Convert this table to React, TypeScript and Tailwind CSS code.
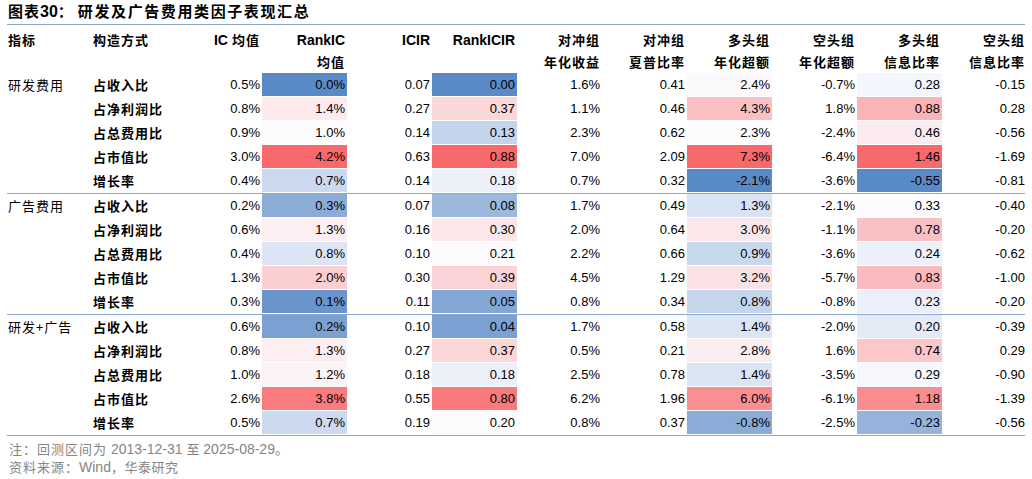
import React from "react";

type Row = string[];
type Section = { name: string; rows: Row[] };

const sections: Section[] = [
  {
    name: "研发费用",
    rows: [
      ["占收入比", "0.5%", "0.0%", "0.07", "0.00", "1.6%", "0.41", "2.4%", "-0.7%", "0.28", "-0.15"],
      ["占净利润比", "0.8%", "1.4%", "0.27", "0.37", "1.1%", "0.46", "4.3%", "1.8%", "0.88", "0.28"],
      ["占总费用比", "0.9%", "1.0%", "0.14", "0.13", "2.3%", "0.62", "2.3%", "-2.4%", "0.46", "-0.56"],
      ["占市值比", "3.0%", "4.2%", "0.63", "0.88", "7.0%", "2.09", "7.3%", "-6.4%", "1.46", "-1.69"],
      ["增长率", "0.4%", "0.7%", "0.14", "0.18", "0.7%", "0.32", "-2.1%", "-3.6%", "-0.55", "-0.81"],
    ],
  },
  {
    name: "广告费用",
    rows: [
      ["占收入比", "0.2%", "0.3%", "0.07", "0.08", "1.7%", "0.49", "1.3%", "-2.1%", "0.33", "-0.40"],
      ["占净利润比", "0.6%", "1.3%", "0.16", "0.30", "2.0%", "0.64", "3.0%", "-1.1%", "0.78", "-0.20"],
      ["占总费用比", "0.4%", "0.8%", "0.10", "0.21", "2.2%", "0.66", "0.9%", "-3.6%", "0.24", "-0.62"],
      ["占市值比", "1.3%", "2.0%", "0.30", "0.39", "4.5%", "1.29", "3.2%", "-5.7%", "0.83", "-1.00"],
      ["增长率", "0.3%", "0.1%", "0.11", "0.05", "0.8%", "0.34", "0.8%", "-0.8%", "0.23", "-0.20"],
    ],
  },
  {
    name: "研发+广告",
    rows: [
      ["占收入比", "0.6%", "0.2%", "0.10", "0.04", "1.7%", "0.58", "1.4%", "-2.0%", "0.20", "-0.39"],
      ["占净利润比", "0.8%", "1.3%", "0.27", "0.37", "0.5%", "0.21", "2.8%", "1.6%", "0.74", "0.29"],
      ["占总费用比", "1.0%", "1.2%", "0.18", "0.18", "2.5%", "0.78", "1.4%", "-3.5%", "0.29", "-0.90"],
      ["占市值比", "2.6%", "3.8%", "0.55", "0.80", "6.2%", "1.96", "6.0%", "-6.1%", "1.18", "-1.39"],
      ["增长率", "0.5%", "0.7%", "0.19", "0.20", "0.8%", "0.37", "-0.8%", "-2.5%", "-0.23", "-0.56"],
    ],
  },
];

const colored = [1, 3, 6, 8];

const allRows = sections.flatMap((s) => s.rows);
const num = (s: string) => parseFloat(s.replace("%", ""));

const stats: Record<number, { min: number; mid: number; max: number }> = {};
colored.forEach((c) => {
  const vals = allRows.map((r) => num(r[c + 1])).sort((a, b) => a - b);
  stats[c] = { min: vals[0], mid: vals[Math.floor(vals.length / 2)], max: vals[vals.length - 1] };
});

const BLUE = [90, 138, 198];
const WHITE = [252, 252, 255];
const RED = [248, 105, 107];

function mix(a: number[], b: number[], t: number) {
  const c = a.map((v, i) => Math.round(v + (b[i] - v) * t));
  return `rgb(${c[0]},${c[1]},${c[2]})`;
}

function colorFor(c: number, v: number) {
  const { min, mid, max } = stats[c];
  if (v <= mid) {
    const t = mid === min ? 1 : (v - min) / (mid - min);
    return mix(BLUE, WHITE, Math.max(0, Math.min(1, t)));
  }
  const t = (v - mid) / (max - mid);
  return mix(WHITE, RED, Math.max(0, Math.min(1, t)));
}

const header1 = ["IC 均值", "RankIC", "ICIR", "RankICIR", "对冲组", "对冲组", "多头组", "空头组", "多头组", "空头组"];
const header2 = ["", "均值", "", "", "年化收益", "夏普比率", "年化超额", "年化超额", "信息比率", "信息比率"];

const grid = "grid grid-cols-[repeat(12,85px)]";

function HeadText({ t }: { t: string }) {
  if (t === "IC 均值") {
    return (
      <span>
        <span className="font-['Liberation_Sans',sans-serif] font-bold text-[14px]">IC</span>
        <span className="ml-[4px] tracking-[1px]">均值</span>
      </span>
    );
  }
  if (/^[A-Za-z]/.test(t)) {
    return <span className="font-['Liberation_Sans',sans-serif] font-bold text-[14px]">{t}</span>;
  }
  return <span className="tracking-[1px]">{t}</span>;
}

export default function App() {
  return (
    <div className="w-[1032px] h-[479px] bg-white px-[7px] text-black font-['Liberation_Sans','Noto_Sans_CJK_SC',sans-serif]">
      <div className="h-[25px] border-b border-[#8ea6c9] flex items-center pl-[1px] pb-[1px]">
        <span className="font-['Noto_Sans_CJK_SC',sans-serif] font-bold text-[15px] tracking-[1px]">图表</span>
        <span className="font-['Liberation_Sans',sans-serif] font-bold text-[16px]">30</span>
        <span className="font-['Noto_Sans_CJK_SC',sans-serif] font-bold text-[15px]">：</span>
        <span className="font-['Noto_Sans_CJK_SC',sans-serif] font-bold text-[15px] tracking-[1.6px] ml-[5px]">
          研发及广告费用类因子表现汇总
        </span>
      </div>

      {/* header */}
      <div className={`${grid} pt-[4px] text-[13px] font-['Noto_Sans_CJK_SC',sans-serif] font-semibold`}>
        <div className="h-[22px] flex items-center pl-[1px] tracking-[1px]">指标</div>
        <div className="h-[22px] flex items-center pl-[1px] tracking-[1px]">构造方式</div>
        {header1.map((h, i) => (
          <div key={i} className="h-[22px] flex items-center justify-end pr-[2px]">
            <HeadText t={h} />
          </div>
        ))}
        <div className="h-[22px]" />
        <div className="h-[22px]" />
        {header2.map((h, i) => (
          <div key={i} className="h-[22px] flex items-center justify-end pr-[2px]">
            {h && <HeadText t={h} />}
          </div>
        ))}
      </div>

      {sections.map((s) => (
        <div key={s.name} className="border-b border-[#8ea6c9]">
          {s.rows.map((r, ri) => (
            <div key={ri} className={`${grid} h-[24px] text-[13px]`}>
              <div className="h-[23px] flex items-center pl-[1px] font-['Noto_Sans_CJK_SC',sans-serif] tracking-[1px]">
                {ri === 0 ? s.name : ""}
              </div>
              <div className="h-[23px] flex items-center pl-[1px] font-['Noto_Sans_CJK_SC',sans-serif] font-semibold tracking-[1px]">
                {r[0]}
              </div>
              {r.slice(1).map((v, ci) => {
                const isColored = colored.includes(ci);
                return (
                  <div
                    key={ci}
                    className="h-[23px] flex items-center justify-end pr-[2px] font-['Liberation_Sans',sans-serif]"
                    style={isColored ? { backgroundColor: colorFor(ci, num(v)) } : undefined}
                  >
                    {v}
                  </div>
                );
              })}
            </div>
          ))}
        </div>
      ))}

      <div className="pl-[2px] pt-[4px] text-[14px] text-[#858585] font-['Liberation_Sans','Noto_Sans_CJK_SC',sans-serif] leading-[17px]">
        <div>
          <span className="font-['Noto_Sans_CJK_SC',sans-serif] text-[13px] tracking-[1px]">注：回测区间为</span> 2013-12-31{" "}
          <span className="font-['Noto_Sans_CJK_SC',sans-serif] text-[13px]">至</span> 2025-08-29
          <span className="font-['Noto_Sans_CJK_SC',sans-serif] text-[13px]">。</span>
        </div>
        <div>
          <span className="font-['Noto_Sans_CJK_SC',sans-serif] text-[13px] tracking-[1px]">资料来源：</span>Wind
          <span className="font-['Noto_Sans_CJK_SC',sans-serif] text-[13px] tracking-[0.5px]">，华泰研究</span>
        </div>
      </div>
    </div>
  );
}
